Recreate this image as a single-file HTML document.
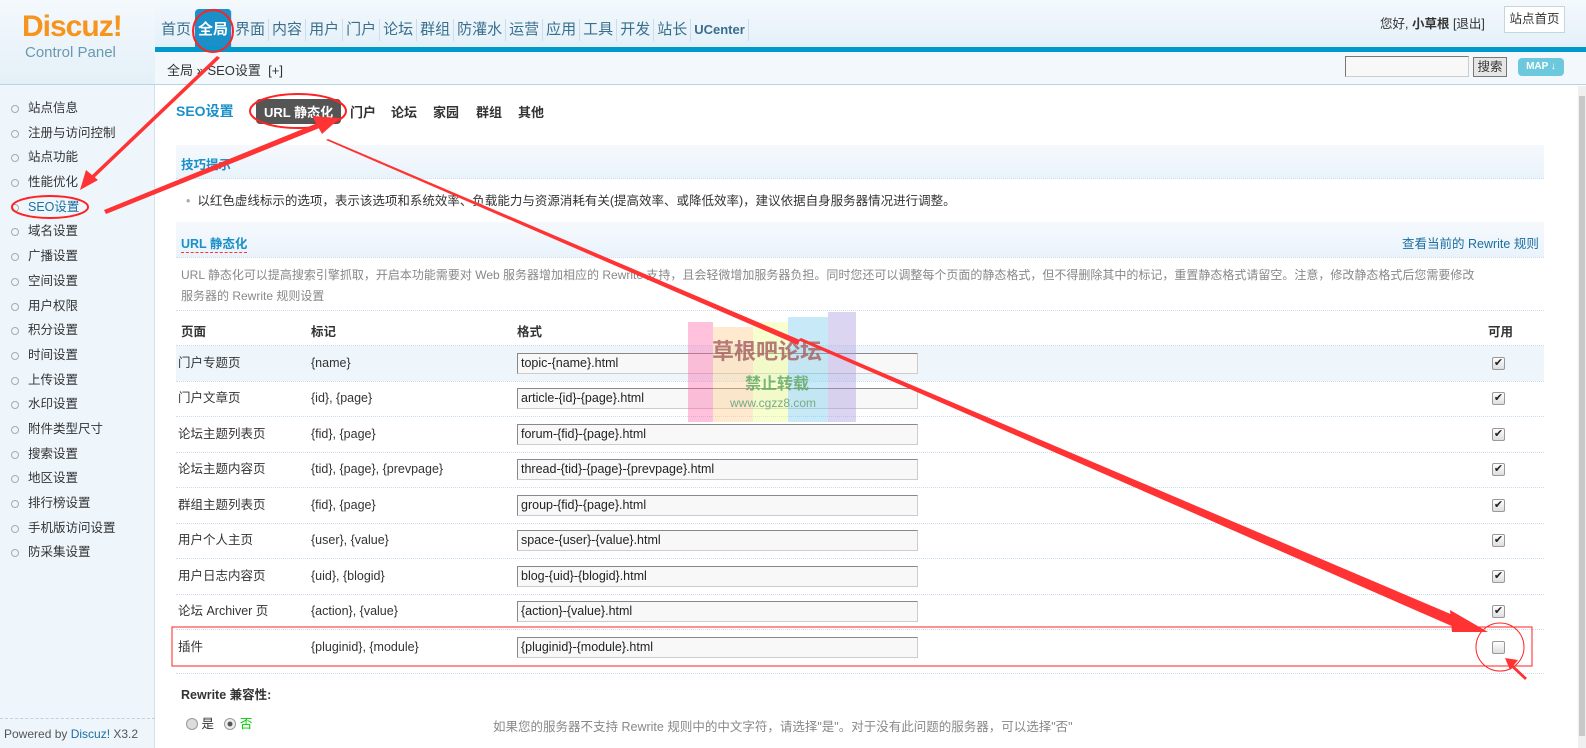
<!DOCTYPE html>
<html><head><meta charset="utf-8"><style>
*{margin:0;padding:0;box-sizing:border-box}
html,body{width:1586px;height:748px;overflow:hidden}
body{position:relative;background:#fff;font-family:"Liberation Sans","Noto Sans CJK SC",sans-serif;font-size:12px;color:#333}
.hd{position:absolute;left:0;top:0;width:1586px;height:52px;background:linear-gradient(#f4f9fd,#e2eff8)}
.lhd{position:absolute;left:0;top:0;width:155px;height:85px;background:linear-gradient(#f4f9fd,#e4f0f8);border-bottom:1px solid #b6d4e2}
.logo{position:absolute;left:22px;top:10px;font:bold 30px "Liberation Sans",sans-serif;color:#f7941d;letter-spacing:-1px}
.cp{position:absolute;left:25px;top:44px;font-size:15px;color:#6a98ad}
.nav{position:absolute;left:158px;top:19px;display:flex;font-size:15px;color:#3a6f8c}
.nav span{padding:0 3px;border-right:1px solid #cde;height:22px;line-height:22px}
.nav .on{background:#1a8fc8;color:#fff;font-weight:bold;border-radius:4px 4px 0 0;height:38px;margin-top:-10px;padding-top:10px}
.bar{position:absolute;left:155px;top:47px;width:1431px;height:5px;background:#0099cc}
.crumb{position:absolute;left:155px;top:52px;width:1431px;height:33px;background:#f2f8fc;border-bottom:1px solid #b6d4e2;font-size:13px;padding:8px 12px;color:#333}
.side{position:absolute;left:0;top:85px;width:155px;height:663px;background:#eef6fc;border-right:1px solid #cfe3f1}
.side ul{list-style:none;margin-top:11px}
.side li{height:24.7px;line-height:24.7px;padding-left:28px;position:relative;font-size:12.5px}
.side li:before{content:"";position:absolute;left:11px;top:9px;width:6px;height:6px;border:1px solid #aaa;border-radius:50%}
.pw{position:absolute;left:0;bottom:0;width:155px;height:30px;border-top:1px dashed #ccd;font-size:12px;padding:8px 4px;color:#555}
.t{position:absolute;white-space:nowrap}
.tb{position:absolute;left:176px;width:1368px;background:linear-gradient(#f5f9fd,#eaf3fb);border-bottom:1px dotted #cde}
.line{position:absolute;left:176px;width:1368px;border-bottom:1px dotted #cde}
.inp{position:absolute;left:517px;width:401px;height:21px;border:1px solid #888;border-right-color:#ccc;border-bottom-color:#ccc;background:#f8f8f8;font-size:12.5px;padding:2px 3px;color:#222}
.cb{position:absolute;left:1492px;width:13px;height:13px;border:1px solid #999;border-radius:2px;background:linear-gradient(#fff,#ddd);font-size:11px;line-height:11px;text-align:center;color:#222}
.scroll{position:absolute;left:1578px;top:86px;width:8px;height:662px;background:#f0f0f0}
.scroll div{position:absolute;top:10px;left:1px;width:6px;height:640px;background:#c8c8c8}
.r{font-size:12.5px}
.l{font-size:12.5px;margin-top:-4px}
</style></head><body>
<div class="hd"></div>
<div class="lhd"></div>
<div class="logo">Discuz!</div>
<div class="cp">Control Panel</div>
<div class="nav"><span>首页</span><span class="on">全局</span><span>界面</span><span>内容</span><span>用户</span><span>门户</span><span>论坛</span><span>群组</span><span>防灌水</span><span>运营</span><span>应用</span><span>工具</span><span>开发</span><span>站长</span><span style="font-weight:bold;font-size:13px">UCenter</span></div>
<div class="t" style="left:1380px;top:13px;font-size:12.5px">您好, <b>小草根</b> [退出]</div>
<div class="t" style="left:1504px;top:6px;width:61px;height:27px;border:1px solid #c6d6dd;background:#fff;font-size:12.5px;line-height:25px;text-align:center">站点首页</div>
<div class="bar"></div>
<div class="side"><ul>
<li>站点信息</li><li>注册与访问控制</li><li>站点功能</li><li>性能优化</li><li style="color:#1a6fa0">SEO设置</li><li>域名设置</li><li>广播设置</li><li>空间设置</li><li>用户权限</li><li>积分设置</li><li>时间设置</li><li>上传设置</li><li>水印设置</li><li>附件类型尺寸</li><li>搜索设置</li><li>地区设置</li><li>排行榜设置</li><li>手机版访问设置</li><li>防采集设置</li></ul>
<div class="pw">Powered by <span style="color:#1a6fa0">Discuz!</span> X3.2</div></div>
<div class="crumb">全局 » SEO设置 &nbsp;[+]</div>
<div class="t" style="left:1345px;top:56px;width:124px;height:21px;border:1px solid #777;border-right-color:#ccc;border-bottom-color:#ccc;background:#f8f8f8"></div>
<div class="t" style="left:1473px;top:57px;width:34px;height:20px;border:1px solid #777;background:#e6e6e6;font-size:12.5px;text-align:center;line-height:18px">搜索</div>
<div class="t" style="left:1518px;top:58px;width:46px;height:18px;border-radius:4px;background:#6cc8dc;color:#fff;font-weight:bold;font-size:10px;text-align:center;line-height:18px">MAP ↓</div>
<div class="scroll"><div></div></div>

<div class="t" style="left:176px;top:101px;color:#1a8fc8;font-size:14px;font-weight:bold">SEO设置</div>
<div class="t" style="left:256px;top:99px;background:#555;color:#fff;padding:3px 8px;border-radius:4px;font-size:13px;font-weight:bold">URL 静态化</div>
<div class="t" style="left:350px;top:102px;font-size:13px;font-weight:bold">门户</div>
<div class="t" style="left:391px;top:102px;font-size:13px;font-weight:bold">论坛</div>
<div class="t" style="left:433px;top:102px;font-size:13px;font-weight:bold">家园</div>
<div class="t" style="left:476px;top:102px;font-size:13px;font-weight:bold">群组</div>
<div class="t" style="left:518px;top:102px;font-size:13px;font-weight:bold">其他</div>

<div class="tb" style="top:145px;height:34px"></div>
<div class="t" style="left:181px;top:154px;color:#1a8fc8;font-weight:bold;font-size:12.5px">技巧提示</div>
<div class="t r" style="left:186px;top:190px"><span style="color:#aaa">•</span>&nbsp; 以红色虚线标示的选项，表示该选项和系统效率、负载能力与资源消耗有关(提高效率、或降低效率)，建议依据自身服务器情况进行调整。</div>
<div class="tb" style="top:222px;height:36px"></div>
<div class="t" style="left:181px;top:233px;color:#1a8fc8;font-weight:bold;font-size:12.5px;border-bottom:1px dashed #f33">URL 静态化</div>
<div class="t" style="left:1402px;top:233px;color:#1a6fa0;font-size:12.5px">查看当前的 Rewrite 规则</div>
<div class="t" style="left:181px;top:265px;color:#888;font-size:12px;line-height:21px">URL 静态化可以提高搜索引擎抓取，开启本功能需要对 Web 服务器增加相应的 Rewrite 支持，且会轻微增加服务器负担。同时您还可以调整每个页面的静态格式，但不得删除其中的标记，重置静态格式请留空。注意，修改静态格式后您需要修改<br>服务器的 Rewrite 规则设置</div>
<div class="line" style="top:310px"></div>
<div class="t r" style="left:181px;top:321px;font-weight:bold">页面</div>
<div class="t r" style="left:311px;top:321px;font-weight:bold">标记</div>
<div class="t r" style="left:517px;top:321px;font-weight:bold">格式</div>
<div class="t r" style="left:1488px;top:321px;font-weight:bold">可用</div>
<div class="line" style="top:345px"></div>
<div class="t" style="left:176px;top:346px;width:1368px;height:35px;background:#eef6fc"></div>

<div class="t l" style="left:178px;top:356px">门户专题页</div><div class="t r" style="left:311px;top:356px">{name}</div><div class="inp" style="top:353px">topic-{name}.html</div><div class="cb" style="top:357px">✔</div><div class="line" style="top:381px"></div>
<div class="t l" style="left:178px;top:391px">门户文章页</div><div class="t r" style="left:311px;top:391px">{id}, {page}</div><div class="inp" style="top:388px">article-{id}-{page}.html</div><div class="cb" style="top:392px">✔</div><div class="line" style="top:416px"></div>
<div class="t l" style="left:178px;top:427px">论坛主题列表页</div><div class="t r" style="left:311px;top:427px">{fid}, {page}</div><div class="inp" style="top:424px">forum-{fid}-{page}.html</div><div class="cb" style="top:428px">✔</div><div class="line" style="top:452px"></div>
<div class="t l" style="left:178px;top:462px">论坛主题内容页</div><div class="t r" style="left:311px;top:462px">{tid}, {page}, {prevpage}</div><div class="inp" style="top:459px">thread-{tid}-{page}-{prevpage}.html</div><div class="cb" style="top:463px">✔</div><div class="line" style="top:487px"></div>
<div class="t l" style="left:178px;top:498px">群组主题列表页</div><div class="t r" style="left:311px;top:498px">{fid}, {page}</div><div class="inp" style="top:495px">group-{fid}-{page}.html</div><div class="cb" style="top:499px">✔</div><div class="line" style="top:523px"></div>
<div class="t l" style="left:178px;top:533px">用户个人主页</div><div class="t r" style="left:311px;top:533px">{user}, {value}</div><div class="inp" style="top:530px">space-{user}-{value}.html</div><div class="cb" style="top:534px">✔</div><div class="line" style="top:558px"></div>
<div class="t l" style="left:178px;top:569px">用户日志内容页</div><div class="t r" style="left:311px;top:569px">{uid}, {blogid}</div><div class="inp" style="top:566px">blog-{uid}-{blogid}.html</div><div class="cb" style="top:570px">✔</div><div class="line" style="top:594px"></div>
<div class="t l" style="left:178px;top:604px">论坛 Archiver 页</div><div class="t r" style="left:311px;top:604px">{action}, {value}</div><div class="inp" style="top:601px">{action}-{value}.html</div><div class="cb" style="top:605px">✔</div><div class="line" style="top:629px"></div>
<div class="t l" style="left:178px;top:640px">插件</div><div class="t r" style="left:311px;top:640px">{pluginid}, {module}</div><div class="inp" style="top:637px">{pluginid}-{module}.html</div><div class="cb" style="top:641px"></div><div class="line" style="top:673px"></div>
<div class="t r" style="left:181px;top:684px;font-weight:bold">Rewrite 兼容性:</div>
<div class="t r" style="left:186px;top:713px"><span style="display:inline-block;width:12px;height:12px;border:1px solid #999;border-radius:50%;background:#ddd;vertical-align:-2px"></span> 是 &nbsp; <span style="display:inline-block;width:12px;height:12px;border:1px solid #999;border-radius:50%;background:radial-gradient(#555 30%,#eee 40%);vertical-align:-2px"></span> <span style="color:#0c0">否</span></div>
<div class="t r" style="left:493px;top:716px;color:#888">如果您的服务器不支持 Rewrite 规则中的中文字符，请选择"是"。对于没有此问题的服务器，可以选择"否"</div>

<div class="t" style="left:688px;top:312px;width:180px;height:110px;opacity:.4">
<div style="position:absolute;left:0;top:10px;width:25px;height:100px;background:#f6a"></div>
<div style="position:absolute;left:25px;top:15px;width:40px;height:95px;background:#fc8"></div>
<div style="position:absolute;left:65px;top:10px;width:35px;height:100px;background:#ef8"></div>
<div style="position:absolute;left:100px;top:5px;width:40px;height:105px;background:#7ce"></div>
<div style="position:absolute;left:140px;top:0;width:28px;height:110px;background:#a9d"></div>
</div>
<div class="t" style="left:712px;top:334px;font-size:22px;font-weight:bold;color:#a66;opacity:.85">草根吧论坛</div>
<div class="t" style="left:745px;top:370px;font-size:16px;font-weight:bold;color:#6a6;opacity:.85">禁止转载</div>
<div class="t" style="left:730px;top:396px;font-size:12px;color:#7a8">www.cgzz8.com</div>
<svg width="1586" height="748" style="position:absolute;left:0;top:0">
<g fill="none" stroke="#f22" stroke-width="2">
<ellipse cx="213" cy="31" rx="20" ry="21"/>
<ellipse cx="298" cy="111" rx="48" ry="17"/>
<ellipse cx="50" cy="207" rx="38" ry="11"/>
<circle cx="1500" cy="647" r="24" stroke-width="1"/>
<rect x="172" y="627" width="1360" height="39" stroke-width="1"/>
</g>
<g fill="#f33">
<polygon points="217,56 220,58 92,180 89,178"/>
<polygon points="80,190 86,170 98,180"/>
<polygon points="104,210 320,122 322,127 106,214"/>
<polygon points="340,118 312,116 322,134"/>
<polygon points="326,140 328,139 800,340 798,345"/>
<polygon points="798,340 801,338 1460,618 1454,627"/>
<polygon points="1488,632 1450,610 1452,632"/>
<polygon points="1525,680 1527,678 1510,662 1508,664"/>
<polygon points="1505,658 1518,660 1510,670"/>
</g>
</svg>
</body></html>
